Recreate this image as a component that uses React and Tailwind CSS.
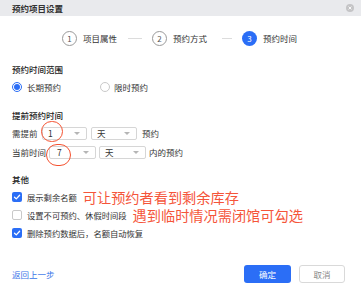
const font = { fontFamily: '"Noto Sans CJK SC", "Noto Sans", sans-serif' };

function Step({ n, label, active }) {
  return (
    <div className="flex items-center">
      <span
        className={`flex h-[15px] w-[15px] items-center justify-center rounded-full text-[8px] ${
          active ? 'bg-[#2b6ef6] text-white' : 'border border-[#9a9a9a] text-[#555]'
        }`}
      >
        {n}
      </span>
      <span className="ml-[6px] text-[8.5px] leading-none text-[#333]">{label}</span>
    </div>
  );
}

function Select({ value, width, pad = 'pl-[5px]', mark }) {
  return (
    <div className={`relative flex h-[13px] items-center justify-between rounded-[2px] border border-[#d6d6d6] bg-white ${pad} pr-[6px]`} style={{ width }}>
      <span className="text-[8.5px] leading-none text-[#333]">{value}</span>
      <span className="h-0 w-0 border-x-[3px] border-t-[3px] border-x-transparent border-t-[#b5b5b5]" />
      {mark}
    </div>
  );
}

function Check({ checked, label, note }) {
  return (
    <div className="flex h-[18px] items-center">
      {checked ? (
        <span className="flex h-[10px] w-[10px] items-center justify-center rounded-[2px] bg-[#2b6ef6]">
          <svg width="8" height="8" viewBox="0 0 8 8">
            <path d="M1.5 4.2 L3.3 5.9 L6.6 2.3" fill="none" stroke="white" strokeWidth="1.3" strokeLinecap="round" strokeLinejoin="round" />
          </svg>
        </span>
      ) : (
        <span className="h-[10px] w-[10px] rounded-[2px] border border-[#c9c9c9] bg-white" />
      )}
      <span className="ml-[5px] text-[8.3px] leading-none text-[#333]">{label}</span>
      {note && <span className="ml-[6px] text-[14.2px] leading-none text-[#f5553a]">{note}</span>}
    </div>
  );
}

export default function App() {
  return (
    <div className="h-[300px] w-[361px] overflow-hidden bg-white" style={font}>
      <div className="flex h-4 items-center justify-between bg-[#e9eaed] pl-3 pr-[7px]">
        <span className="text-[8.5px] font-semibold leading-none text-[#333]">预约项目设置</span>
        <span className="flex h-[8px] w-[8px] items-center justify-center rounded-full bg-[#c4c4c6]">
          <svg width="6" height="6" viewBox="0 0 6 6">
            <path d="M1.6 1.6 L4.4 4.4 M4.4 1.6 L1.6 4.4" stroke="white" strokeWidth="0.9" />
          </svg>
        </span>
      </div>

      <div className="mt-[15px] flex items-center pl-[62px]">
        <Step n="1" label="项目属性" />
        <span className="ml-[11px] mr-[10px] h-px w-[14px] bg-[#dcdcdc]" />
        <Step n="2" label="预约方式" />
        <span className="ml-[15px] mr-[10px] h-px w-[10px] bg-[#dcdcdc]" />
        <Step n="3" label="预约时间" active />
      </div>

      <div className="px-3">
        <div className="mt-[17px] text-[8.5px] font-medium leading-3 text-[#222]">预约时间范围</div>
        <div className="mt-[6px] flex h-[12px] items-center text-[8.5px] text-[#333]">
          <span className="flex h-[10px] w-[10px] items-center justify-center rounded-full border border-[#2b6ef6]">
            <span className="h-[6px] w-[6px] rounded-full bg-[#2b6ef6]" />
          </span>
          <span className="ml-[5px]">长期预约</span>
          <span className="ml-[39px] h-[10px] w-[10px] rounded-full border border-[#c9c9c9]" />
          <span className="ml-[4px]">限时预约</span>
        </div>

        <div className="mt-[16px] text-[8.5px] font-medium leading-3 text-[#222]">提前预约时间</div>
        <div className="mt-[6px] flex items-center text-[8.5px] text-[#333]">
          <span className="w-[30px]">需提前</span>
          <Select
            value="1"
            width={45}
            mark={<span className="absolute left-[-2px] top-[-7px] h-[21px] w-[22px] rounded-full border-[1.5px] border-[#f4512f]" />}
          />
          <span className="ml-[4px]"><Select value="天" width={46} /></span>
          <span className="ml-[5px]">预约</span>
        </div>
        <div className="mt-[6px] flex items-center text-[8.5px] text-[#333]">
          <span className="w-[37px]">当前时间</span>
          <Select
            value="7"
            width={47}
            pad="pl-[7px]"
            mark={<span className="absolute left-[-4px] top-[-3px] h-[22px] w-[25px] rounded-full border-[1.5px] border-[#f4512f]" />}
          />
          <span className="ml-[3px]"><Select value="天" width={47} /></span>
          <span className="ml-[3px]">内的预约</span>
        </div>

        <div className="mt-[14px] text-[8.5px] font-medium leading-3 text-[#222]">其他</div>
        <div className="mt-[3px] flex flex-col">
          <Check checked label="展示剩余名额" note="可让预约者看到剩余库存" />
          <Check label="设置不可预约、休假时间段" note="遇到临时情况需闭馆可勾选" />
          <Check checked label="删除预约数据后，名额自动恢复" />
        </div>

        <div className="mt-[23px] flex items-center justify-between pr-[4px]">
          <span className="text-[8.5px] text-[#3a74e8]">返回上一步</span>
          <div className="flex gap-[8px]">
            <button className="flex h-[18px] w-[47px] items-center justify-center rounded-[3px] bg-[#2b6ef6] text-[8.5px] text-white">确定</button>
            <button className="flex h-[18px] w-[46px] items-center justify-center rounded-[3px] border border-[#d9d9d9] bg-white text-[8.5px] text-[#888]">取消</button>
          </div>
        </div>
      </div>
    </div>
  );
}
